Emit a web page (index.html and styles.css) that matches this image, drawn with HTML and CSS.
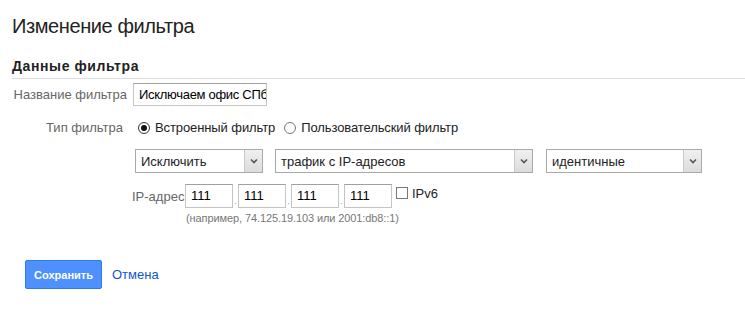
FILE: index.html
```html
<!DOCTYPE html>
<html lang="ru">
<head>
  <meta charset="UTF-8" />
  <title>Изменение фильтра</title>
  <link rel="stylesheet" href="styles.css">
</head>
<body>
  <div class="page">
    <h1>Изменение фильтра</h1>

    <!-- Данные фильтра -->
    <h2>Данные фильтра</h2>

    <div class="row row-name">
      <div class="lbl">Название фильтра</div>
      <div class="field">
        <div class="text name-input">Исключаем офис СПб</div>
      </div>
    </div>

    <div class="row row-type">
      <div class="lbl lbl-type">Тип фильтра</div>
      <div class="field radios">
        <span class="radio checked"></span><span class="radio-text">Встроенный фильтр</span>
        <span class="radio"></span><span class="radio-text">Пользовательский фильтр</span>
      </div>
    </div>

    <div class="row row-selects">
      <div class="lbl"></div>
      <div class="field selects">
        <div class="select sel-action"><span class="sel-val">Исключить</span><span class="sel-btn"><svg width="8" height="6" viewBox="0 0 8 6"><path d="M1 1.5 L4 4.5 L7 1.5" fill="none" stroke="#555" stroke-width="1.6"/></svg></span></div>
        <div class="select sel-source"><span class="sel-val">трафик с IP-адресов</span><span class="sel-btn"><svg width="8" height="6" viewBox="0 0 8 6"><path d="M1 1.5 L4 4.5 L7 1.5" fill="none" stroke="#555" stroke-width="1.6"/></svg></span></div>
        <div class="select sel-match"><span class="sel-val">идентичные</span><span class="sel-btn"><svg width="8" height="6" viewBox="0 0 8 6"><path d="M1 1.5 L4 4.5 L7 1.5" fill="none" stroke="#555" stroke-width="1.6"/></svg></span></div>
      </div>
    </div>

    <div class="row row-ip">
      <div class="lbl"></div>
      <div class="field">
        <div class="ip-line">
          <span class="ip-lbl">IP-адрес</span>
          <span class="text ip">111</span><span class="dot">.</span>
          <span class="text ip">111</span><span class="dot">.</span>
          <span class="text ip">111</span><span class="dot">.</span>
          <span class="text ip">111</span>
          <span class="checkbox"></span><span class="cb-text">IPv6</span>
        </div>
        <div class="hint">(например, 74.125.19.103 или 2001:db8::1)</div>
      </div>
    </div>

    <div class="actions">
      <button class="btn-save">Сохранить</button>
      <a class="cancel" href="#">Отмена</a>
    </div>
  </div>
</body>
</html>
```

FILE: styles.css
```css
* { box-sizing: border-box; }
body {
  margin: 0;
  font-family: "Liberation Sans", Arial, sans-serif;
  font-size: 13px;
  color: #222;
  background: #fff;
}
.page {
  padding: 15px 0 0 12px;
}
h1 {
  margin: 0;
  font-size: 20px;
  font-weight: normal;
  line-height: 23px;
  letter-spacing: -0.4px;
  color: #222;
}
h2 {
  margin: 21px 0 0;
  padding-bottom: 4px;
  font-size: 14px;
  font-weight: bold;
  line-height: 15px;
  letter-spacing: 0.6px;
  color: #222;
  border-bottom: 1px solid #ddd;
}

.row {
  display: flex;
  align-items: center;
}
.lbl {
  width: 115px;
  flex: none;
  text-align: right;
  color: #666;
}
.lbl-type { padding-right: 4px; }
.field { margin-left: 6px; }

/* Текстовые поля */
.text {
  display: block;
  color: #000;
  border: 1px solid #c4c4c4;
  border-top-color: #a0a0a0;
  height: 23px;
  line-height: 21px;
  padding: 0 5px;
  white-space: nowrap;
  overflow: hidden;
}

.row-name { margin-top: 4px; }
.name-input {
  width: 134px;
  letter-spacing: -0.3px;
  padding: 0 0 0 5px;
}

/* Тип фильтра */
.row-type { margin-top: 14px; line-height: 16px; }
.radios { display: flex; align-items: center; }
.radio {
  width: 12px;
  height: 12px;
  border: 1px solid #777;
  border-radius: 50%;
  margin-left: 5px;
  position: relative;
}
.radio + .radio-text { margin-left: 5px; }
.radio-text + .radio { margin-left: 9px; }
.radio.checked { border-color: #333; }
.radio.checked::after {
  content: "";
  position: absolute;
  left: 2px;
  top: 2px;
  width: 6px;
  height: 6px;
  border-radius: 50%;
  background: #111;
}
.radio-text { color: #222; letter-spacing: -0.1px; }

/* Выпадающие списки */
.row-selects { margin-top: 13px; }
.selects { display: flex; margin-left: 8px; }
.select {
  display: flex;
  height: 24px;
  border: 1px solid #aaa;
  background: #fff;
  margin-right: 12px;
}
.sel-action { width: 128px; }
.sel-source { width: 258px; }
.sel-match { width: 156px; margin-left: 1px; }
.sel-val {
  flex: 1;
  padding: 1px 0 0 5px;
  line-height: 22px;
  color: #222;
  white-space: nowrap;
  overflow: hidden;
}
.sel-btn {
  width: 18px;
  background: linear-gradient(#f0f0f0, #dcdcdc);
  border-left: 1px solid #c8c8c8;
  display: flex;
  align-items: center;
  justify-content: center;
}

/* IP-адрес */
.row-ip { margin-top: 11px; align-items: flex-start; }
.ip-line { display: flex; align-items: center; margin-left: -1px; }
.ip-lbl { color: #666; width: 53px; }
.text.ip { width: 48px; height: 24px; line-height: 22px; }
.dot {
  width: 5px;
  text-align: center;
  color: #999;
  font-size: 9px;
  align-self: flex-end;
  line-height: 14px;
}
.checkbox {
  width: 12px;
  height: 12px;
  border: 1px solid #777;
  margin-left: 4px;
  margin-top: -6px;
}
.cb-text { margin-left: 4px; margin-top: -6px; color: #222; }
.hint {
  margin: 4px 0 0 53px;
  font-size: 11px;
  line-height: 13px;
  letter-spacing: -0.1px;
  color: #777;
}

/* Кнопки */
.actions {
  margin: 35px 0 0 13px;
  display: flex;
  align-items: center;
}
.btn-save {
  width: 77px;
  height: 29px;
  padding: 0;
  background: #4d90fe;
  border: 1px solid #3079ed;
  border-radius: 2px;
  color: #fff;
  font-family: "Liberation Sans", Arial, sans-serif;
  font-size: 11px;
  font-weight: bold;
}
.cancel {
  margin-left: 10px;
  color: #15c;
  text-decoration: none;
  font-size: 13px;
}
```
